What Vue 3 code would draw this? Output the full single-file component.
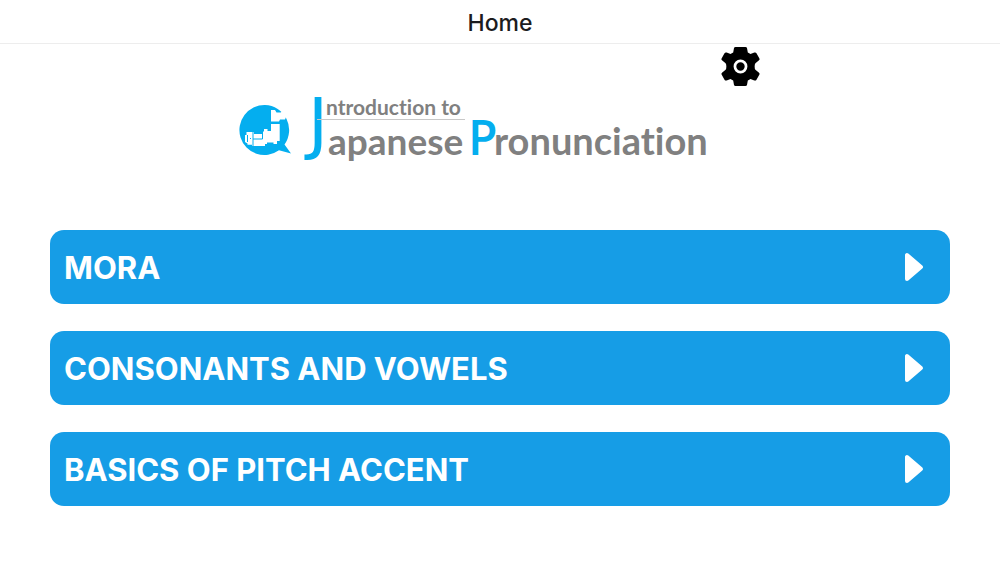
<script setup>
const lessons = ['MORA', 'CONSONANTS AND VOWELS', 'BASICS OF PITCH ACCENT']
</script>

<template>
  <div class="page">
    <header class="bar">
      <h1>Home</h1>
    </header>
    <main>
      <div class="brand">
        <svg class="logo" width="470" height="68" viewBox="0 0 470 68" role="img" aria-label="Introduction to Japanese Pronunciation">
          <path class="cyan" d="M25 11a25 25 0 1 0 14 45.300L51 59.500L44.500 50.500A25 25 0 0 0 25 11z" />
          <path
            class="map"
            d="M31 16h4l1.500 2.500h4l4.500-2.500 5 5-4 2-1 2.500h-5l-1 2h-8zM31 30h8.700v17H37V50h-3.500v-1.500H27V50h-2v2H12v-1.200H7.500V49.500L5 48V41h1.500v-3H14v2h8v-2.500h2V35h3.500v2H31z"
          />
          <path class="seam" d="M13 37v15M13 45h9.500M22.500 37v8M7.500 41v7M10.500 44v1" />
          <text class="cyan initial-j" x="68" y="52">J</text>
          <text class="cyan initial-p" x="228" y="61">P</text>
          <path class="rule" d="M77 25.500H225" />
          <text class="grey small" x="86" y="21">ntroduction to</text>
          <text class="grey medium" x="88" y="61">apanese</text>
          <text class="grey large" x="254" y="61">ronunciation</text>
        </svg>
        <button class="settings" type="button" aria-label="Settings">
          <svg width="39" height="39" viewBox="0 0 40 40" aria-hidden="true">
            <path
              d="M15 0h10q1.500 0 1.700 1.200l.8 4.500q1.500.6 2.700 1.500l4-1.500q1.500-.5 2.200.8l3 5.200q.6 1.200-.4 2L35.300 16.700q-.8.800-.8 3.300t.8 3.300L39 26.300q1 .8.400 2l-3 5.200q-.7 1.300-2.200.8l-4-1.500q-1.200.9-2.700 1.500l-.8 4.500Q26.500 40 25 40H15q-1.500 0-1.700-1.200l-.8-4.500q-1.500-.6-2.700-1.500l-4 1.500q-1.500.5-2.200-.8l-3-5.200q-.6-1.200.4-2l3.700-3q.8-.8.8-3.300t-.8-3.300L1 13.700q-1-.8-.4-2l3-5.200q.7-1.300 2.200-.8l4 1.500q1.200-.9 2.700-1.500l.8-4.500Q13.500 0 15 0z"
            />
            <circle cx="20" cy="20" r="5.700" fill="none" stroke="#fff" stroke-width="2.800" />
          </svg>
        </button>
      </div>
      <nav aria-label="Lessons">
        <button v-for="lesson in lessons" :key="lesson" class="lesson" type="button">
          <span>{{ lesson }}</span>
          <svg width="20" height="30" viewBox="0 0 20 30" aria-hidden="true">
            <path d="M3 3v24L17 15z" fill="#fff" stroke="#fff" stroke-width="4" stroke-linejoin="round" />
          </svg>
        </button>
      </nav>
    </main>
  </div>
</template>

<style>
body {
  background: #fff;
}
</style>

<style scoped>
.page {
  font-family: Inter, "Liberation Sans", sans-serif;
}
.bar {
  display: flex;
  justify-content: center;
  padding-top: 3px;
  border-bottom: 1px solid #ededed;
}
h1 {
  margin: 0;
  color: #1c1c1e;
  font-size: 23px;
  font-weight: 500;
  line-height: 40px;
}
.brand {
  display: flex;
  justify-content: center;
  align-items: flex-start;
  gap: 11px;
}
.logo {
  margin-top: 50px;
  overflow: visible;
  font-family: Lato, "Open Sans", sans-serif;
  font-variant-ligatures: none;
}
.cyan {
  fill: #04aeef;
}
.grey {
  fill: #808080;
  font-weight: 700;
}
.map {
  fill: #fff;
}
.seam {
  fill: none;
  stroke: #04aeef;
  stroke-width: 1;
}
.rule {
  stroke: #c8c8c8;
}
.initial-j {
  font-family: "DejaVu Sans", sans-serif;
  font-size: 68px;
}
.initial-p {
  font-family: "Open Sans", sans-serif;
  font-size: 48px;
  font-weight: 600;
}
.small {
  font-size: 21px;
}
.medium {
  font-size: 37px;
}
.large {
  font-size: 38px;
}
.settings {
  display: block;
  width: 40px;
  margin-top: 3px;
  padding: 0;
  border: 0;
  background: none;
}
.settings svg {
  display: block;
}
nav {
  display: grid;
  gap: 27px;
  margin: 68px 5% 0;
}
.lesson {
  display: flex;
  align-items: center;
  justify-content: space-between;
  padding: 16px 26px 16px 14px;
  border: 0;
  border-radius: 14px;
  background: #169de6;
  color: #fff;
  font-family: inherit;
  font-size: 31px;
  font-weight: 700;
  line-height: 42px;
  text-align: left;
}
.lesson span {
  padding-top: 2px;
  line-height: 40px;
}
</style>
